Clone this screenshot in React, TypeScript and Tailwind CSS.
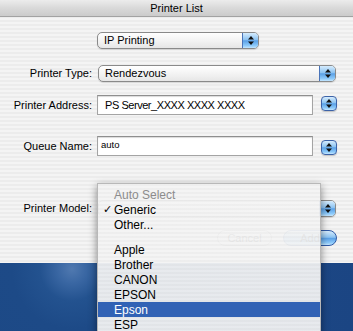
import React from "react";

const aqua =
  "bg-[linear-gradient(180deg,#d6ecfd_0%,#8cc3f2_45%,#5aa0e6_52%,#8ecbfb_85%,#c4e6ff_100%)]";

function Arrows() {
  return (
    <svg width="6" height="9" viewBox="0 0 6 9">
      <polygon points="3,0 6,3.5 0,3.5" fill="#111" />
      <polygon points="0,5.5 6,5.5 3,9" fill="#111" />
    </svg>
  );
}

function Popup({ label, className }: { label: string; className: string }) {
  return (
    <div
      className={
        "flex h-[17px] items-stretch rounded-[5px] border border-[#8a8a8a] bg-[linear-gradient(180deg,#ffffff,#f1f1f1_60%,#e6e6e6)] shadow-[0_1px_1px_rgba(0,0,0,0.12)] " +
        className
      }
    >
      <div className="flex flex-1 items-center pl-[6px] text-[11px] leading-none">{label}</div>
      <div
        className={
          "flex w-[16px] items-center justify-center rounded-r-[4px] border-l border-[#4a74b8] " + aqua
        }
      >
        <Arrows />
      </div>
    </div>
  );
}

function Stepper({ className }: { className: string }) {
  return (
    <div
      className={
        "flex h-[15px] w-[16px] items-center justify-center rounded-[4px] border border-[#3d63a8] shadow-[0_1px_1px_rgba(0,0,0,0.2)] " +
        aqua +
        " " +
        className
      }
    >
      <Arrows />
    </div>
  );
}

function Field({ children, className }: { children?: React.ReactNode; className: string }) {
  return (
    <div
      className={
        "h-[20px] w-[216px] border border-[#a4a4a4] border-t-[#8e8e8e] bg-white shadow-[inset_0_1px_1px_rgba(0,0,0,0.15)] " +
        className
      }
    >
      {children}
    </div>
  );
}

function Label({ children }: { children: string }) {
  return <div className="w-[92px] shrink-0 text-right text-[11px] leading-none">{children}</div>;
}

export default function App() {
  return (
    <div className="relative h-[331px] w-[353px] overflow-hidden font-['Liberation_Sans',Arial,sans-serif] text-black">
      <div className="flex h-[263px] flex-col bg-[repeating-linear-gradient(180deg,#ececec_0px,#ececec_2px,#f4f4f4_2px,#f4f4f4_4px)]">
        <div className="flex h-[17px] shrink-0 items-center justify-center border-b border-[#a2a2a2] bg-[linear-gradient(180deg,#ececec,#d9d9d9_50%,#cbcbcb)] text-[11px] leading-none">
          Printer List
        </div>

        <div className="mt-[15px] flex pl-[97px]">
          <Popup label="IP Printing" className="w-[162px]" />
        </div>

        <div className="mt-[16px] flex items-center gap-[6px]">
          <Label>Printer Type:</Label>
          <Popup label="Rendezvous" className="w-[238px]" />
        </div>

        <div className="mt-[13px] flex items-center gap-[5px]">
          <Label>Printer Address:</Label>
          <Field className="flex items-center pl-[7px] text-[11px] leading-none tracking-[-0.45px]">
            PS Server_XXXX XXXX XXXX
          </Field>
          <Stepper className="mb-[3px] ml-[3px]" />
        </div>

        <div className="mt-[21px] flex items-center gap-[5px]">
          <Label>Queue Name:</Label>
          <Field className="pl-[3px] pt-[3px] text-[9.5px] leading-none">auto</Field>
          <Stepper className="mt-[2px] ml-[3px]" />
        </div>

        <div className="mt-[44px] flex items-center gap-[6px]">
          <Label>Printer Model:</Label>
          <Popup label="" className="w-[238px]" />
        </div>

        <div className="mt-[13px] flex justify-end gap-[11px] pr-[16px]">
          <div className="flex h-[16px] w-[55px] items-center justify-center rounded-full border border-[#9a9a9a] bg-[linear-gradient(180deg,#ffffff,#eeeeee_50%,#f8f8f8)] text-[11px] leading-none text-[#333]">
            Cancel
          </div>
          <div
            className={
              "flex h-[16px] w-[54px] items-center justify-center rounded-full border border-[#2f5aa6] text-[11px] leading-none text-black " +
              aqua
            }
          >
            Add
          </div>
        </div>
      </div>

      <div className="h-[68px] bg-[radial-gradient(circle_at_72px_6px,#5079b0_0px,#3a67a3_14px,#23528f_32px,#1d4a87_60px,#1b4583_100%)]" />

      <div className="absolute left-[97px] top-[183px] h-[160px] w-[224px] border border-[#b8b8b8] bg-[repeating-linear-gradient(180deg,rgba(238,238,238,0.94)_0px,rgba(238,238,238,0.94)_2px,rgba(244,244,244,0.94)_2px,rgba(244,244,244,0.94)_4px)] pt-[3px] text-[12px] leading-none shadow-[0_3px_8px_rgba(0,0,0,0.45)]">
        <div className="flex h-[15px] items-center pl-[16px] text-[#8c8c8c]">Auto Select</div>
        <div className="relative flex h-[15px] items-center pl-[16px]">
          <span className="absolute left-[5px] font-['DejaVu_Sans',sans-serif] text-[11px]">✓</span>
          Generic
        </div>
        <div className="flex h-[15px] items-center pl-[16px]">Other...</div>
        <div className="h-[10px]" />
        <div className="flex h-[15px] items-center pl-[16px]">Apple</div>
        <div className="flex h-[15px] items-center pl-[16px]">Brother</div>
        <div className="flex h-[15px] items-center pl-[16px]">CANON</div>
        <div className="flex h-[15px] items-center pl-[16px]">EPSON</div>
        <div className="flex h-[15px] items-center bg-[#3162b5] pl-[16px] text-white">Epson</div>
        <div className="flex h-[15px] items-center pl-[16px]">ESP</div>
      </div>
    </div>
  );
}
